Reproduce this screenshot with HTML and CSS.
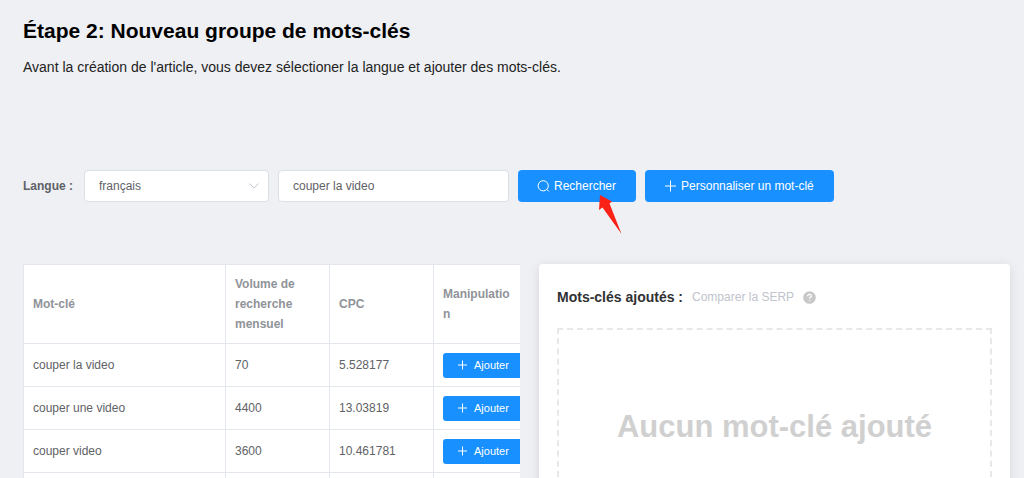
FILE: index.html
```html
<!DOCTYPE html>
<html lang="fr">
<head>
  <meta charset="UTF-8" />
  <title>Nouveau groupe de mots-clés</title>
  <meta name="viewport" content="width=device-width, initial-scale=1.0"/>
  <link rel="stylesheet" href="styles.css">
</head>
<body>
  <main class="page">
    <h1 class="page-title">Étape 2: Nouveau groupe de mots-clés</h1>
    <p class="page-desc">Avant la création de l'article, vous devez sélectioner la langue et ajouter des mots-clés.</p>

    <form class="search-bar">
      <label class="search-label" for="langue">Langue :</label>
      <div class="select-box">
        <select id="langue" class="field">
          <option>français</option>
        </select>
        <svg class="select-arrow" viewBox="0 0 12 12"><path d="M1.5 3.5 6 8.2l4.5-4.7"/></svg>
      </div>
      <input id="motcle" class="field keyword-input" type="text" value="couper la video" aria-label="Mot-clé">
      <button class="btn search-btn" type="button">
        <svg class="icon" viewBox="0 0 14 14"><circle cx="6.2" cy="6.8" r="5.1"/><path d="m9.8 10.400 2 2"/></svg>
        Rechercher
        <svg class="pointer" viewBox="0 0 24 40"><path d="M2 0 14 6.500 11.500 8.500 23.500 39 4.500 12.500 1 15z"/></svg>
      </button>
      <button class="btn" type="button">
        <svg class="icon" viewBox="0 0 14 14"><path d="M6.500 1.500v11M1 7h11"/></svg>
        Personnaliser un mot-clé
      </button>
    </form>

    <div class="columns">
      <div class="table-container">
        <table>
          <colgroup>
            <col class="col-word">
            <col class="col-num">
            <col class="col-num">
            <col>
          </colgroup>
          <thead>
            <tr>
              <th>Mot-clé</th>
              <th>Volume de recherche mensuel</th>
              <th>CPC</th>
              <th>Manipulation</th>
            </tr>
          </thead>
          <tbody>
            <tr>
              <td>couper la video</td>
              <td>70</td>
              <td>5.528177</td>
              <td><button class="add-btn" type="button"><svg class="icon" viewBox="0 0 14 14"><path d="M6.500 2.500v9M2 7h9"/></svg>Ajouter</button></td>
            </tr>
            <tr>
              <td>couper une video</td>
              <td>4400</td>
              <td>13.03819</td>
              <td><button class="add-btn" type="button"><svg class="icon" viewBox="0 0 14 14"><path d="M6.500 2.500v9M2 7h9"/></svg>Ajouter</button></td>
            </tr>
            <tr>
              <td>couper video</td>
              <td>3600</td>
              <td>10.461781</td>
              <td><button class="add-btn" type="button"><svg class="icon" viewBox="0 0 14 14"><path d="M6.500 2.500v9M2 7h9"/></svg>Ajouter</button></td>
            </tr>
            <tr>
              <td></td>
              <td></td>
              <td></td>
              <td></td>
            </tr>
          </tbody>
        </table>
      </div>

      <section class="card">
        <div class="card-head">
          <h2 class="card-title">Mots-clés ajoutés :</h2>
          <a class="serp-link" href="#">Comparer la SERP</a>
          <svg class="help" viewBox="0 0 14 14"><circle cx="7" cy="7" r="6.800"/><path d="M5 5.600C5 4.300 5.900 3.600 7 3.600s2 .7 2 1.800c0 1.300-2 1.500-2 3M7 9.900v1"/></svg>
        </div>
        <div class="empty-box">Aucun mot-clé ajouté</div>
      </section>
    </div>
  </main>
</body>
</html>
```

FILE: styles.css
```css
:root {
  --bg: #eef0f4;
  --primary: #1890ff;
  --border: #dcdfe6;
  --line: #e4e7ed;
  --text: #606266;
  --muted: #909399;
}

* {
  box-sizing: border-box;
}

body {
  margin: 0;
  height: 100vh;
  overflow: hidden;
  font-family: "Liberation Sans", Arial, sans-serif;
  font-size: 12px;
  background: var(--bg);
  color: var(--text);
}

.page {
  padding: 18px 14px 0 23px;
}

.page-title {
  margin: 0 0 13px;
  font-size: 21px;
  line-height: 26px;
  color: #000;
}

.page-desc {
  margin: 0 0 93px;
  font-size: 14px;
  line-height: 20px;
  color: #222;
}

.search-bar {
  display: flex;
  align-items: center;
  gap: 9px;
  margin-bottom: 62px;
}

.search-label {
  min-width: 52px;
  font-weight: bold;
}

.select-box {
  position: relative;
  width: 185px;
}

.field {
  width: 100%;
  height: 32px;
  padding: 0 14px;
  border: 1px solid var(--border);
  border-radius: 4px;
  background: #fff;
  color: var(--text);
  font-family: inherit;
  font-size: 12px;
  appearance: none;
}

.keyword-input {
  width: 231px;
}

.select-arrow {
  position: absolute;
  right: 9px;
  top: 10px;
  width: 12px;
  height: 12px;
  fill: none;
  stroke: #c0c4cc;
}

.btn,
.add-btn {
  display: flex;
  align-items: center;
  border: none;
  background: var(--primary);
  color: #fff;
  font-family: inherit;
  white-space: nowrap;
  cursor: pointer;
}

.btn {
  gap: 3px;
  height: 32px;
  padding: 0 20px 0 19px;
  border-radius: 4px;
  font-size: 12px;
}

.icon {
  flex: none;
  width: 14px;
  height: 14px;
  fill: none;
  stroke: #fff;
}

.search-btn {
  position: relative;
}

.pointer {
  position: absolute;
  left: 80px;
  top: 25px;
  z-index: 1;
  width: 24px;
  height: 40px;
  fill: #fa2216;
}

.columns {
  display: grid;
  grid-template-columns: minmax(0, 497fr) minmax(0, 471fr);
  gap: 19px;
}

.table-container {
  overflow: hidden;
  border-top: 1px solid var(--line);
  border-left: 1px solid var(--line);
  background: #fff;
}

table {
  width: 100%;
  table-layout: fixed;
  border-collapse: separate;
  border-spacing: 0;
}

.col-word {
  width: 202px;
}

.col-num {
  width: 104px;
}

th,
td {
  padding: 9px;
  text-align: left;
  border-right: 1px solid var(--line);
  border-bottom: 1px solid var(--line);
}

th {
  line-height: 20px;
  word-break: break-all;
  color: var(--muted);
}

th:nth-child(2) {
  word-break: normal;
}

td {
  height: 43px;
  padding: 0 9px;
}

th:last-child,
td:last-child {
  border-right: none;
}

.add-btn {
  gap: 4px;
  height: 25px;
  padding: 0 13px;
  border-radius: 3px;
  font-size: 11px;
}

.card {
  min-height: 300px;
  padding: 23px 18px;
  border-radius: 4px;
  background: #fff;
  box-shadow: 0 2px 12px rgba(0, 0, 0, 0.1);
}

.card-head {
  display: flex;
  align-items: center;
  margin-bottom: 21px;
}

.card-title {
  margin: 0 9px 0 0;
  font-size: 14px;
  line-height: 20px;
  color: #303133;
}

.serp-link {
  margin-right: 9px;
  color: #c0c4cc;
  text-decoration: none;
}

.help {
  width: 13px;
  height: 13px;
  fill: #c8c8c8;
}

.help path {
  fill: none;
  stroke: #fff;
  stroke-width: 1.4;
}

.empty-box {
  height: 200px;
  border: 2px dashed #e8e8e8;
  font-size: 31px;
  font-weight: bold;
  line-height: 194px;
  text-align: center;
  color: #d0d0d0;
}
```
